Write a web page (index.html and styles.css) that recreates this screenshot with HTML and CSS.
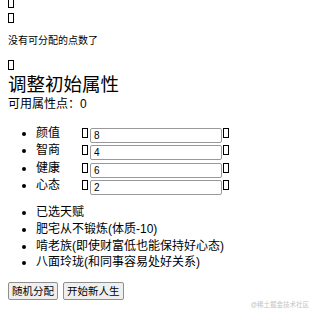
FILE: index.html
```html
<!DOCTYPE html>
<html lang="zh">
<head>
    <meta charset="UTF-8">
    <meta name="viewport" content="width=device-width, initial-scale=1.0">
    <title>人生重开</title>
    <link rel="stylesheet" href="styles.css">
</head>
<body>
    <div class="row first"><span class="tofu"></span></div>
    <div class="row"><span class="tofu"></span></div>
    <p class="tip">没有可分配的点数了</p>
    <div class="row gap"><span class="tofu"></span></div>

    <h2>调整初始属性</h2>
    <p class="points">可用属性点：0</p>

    <ul class="attrs">
        <li><span class="name">颜值</span><span class="tofu"></span><input type="text" value="8"><span class="tofu"></span></li>
        <li><span class="name">智商</span><span class="tofu"></span><input type="text" value="4"><span class="tofu"></span></li>
        <li><span class="name">健康</span><span class="tofu"></span><input type="text" value="6"><span class="tofu"></span></li>
        <li><span class="name">心态</span><span class="tofu"></span><input type="text" value="2"><span class="tofu"></span></li>
    </ul>

    <ul class="talents">
        <li>已选天赋</li>
        <li>肥宅从不锻炼(体质-10)</li>
        <li>啃老族(即使财富低也能保持好心态)</li>
        <li>八面玲珑(和同事容易处好关系)</li>
    </ul>

    <div class="actions">
        <button type="button">随机分配</button>
        <button type="button">开始新人生</button>
    </div>

    <div class="mark">@稀土掘金技术社区</div>
</body>
</html>
```

FILE: styles.css
```css
body {
    margin: 0 8px;
    font-family: "Liberation Sans", "Noto Sans CJK SC", sans-serif;
    font-size: 12px;
    color: #000000;
    background: #ffffff;
}

.tofu {
    display: inline-block;
    width: 4px;
    height: 8px;
    border: 1px solid #000000;
    box-sizing: content-box;
}

.row {
    display: flex;
    align-items: center;
    height: 13px;
    margin-top: 2px;
}

.row.first {
    margin-top: -4px;
}

.row.gap {
    margin-top: 11px;
}

.tip {
    margin: 10px 0 0;
    height: 13px;
    line-height: 13px;
    font-size: 10px;
}

h2 {
    margin: 3px 0 0;
    height: 22px;
    line-height: 22px;
    font-size: 18.5px;
    font-weight: normal;
}

.points {
    margin: 1px 0 0;
    height: 15px;
    line-height: 15px;
}

ul {
    margin: 0;
    padding-left: 28px;
}

.attrs {
    margin-top: 13px;
}

.attrs li {
    height: 17.3px;
    line-height: 17.3px;
}

.name {
    display: inline-block;
    width: 46px;
}

.attrs .tofu {
    vertical-align: -1px;
}

.attrs input {
    width: 132px;
    height: 15px;
    margin: 0 1px 0 2px;
    padding: 0 3px;
    box-sizing: border-box;
    border: 1px solid #999999;
    border-radius: 2px;
    font-family: "Liberation Sans", sans-serif;
    font-size: 10px;
    vertical-align: -2px;
}

.talents {
    margin-top: 10px;
}

.talents li {
    height: 16.7px;
    line-height: 16.7px;
}

.actions {
    display: flex;
    gap: 5px;
    margin-top: 11px;
}

button {
    height: 18px;
    padding: 0 3px;
    font-family: "Liberation Sans", "Noto Sans CJK SC", sans-serif;
    font-size: 10.5px;
    color: #000000;
    background-color: #efefef;
    border: 1px solid #8f8f8f;
    border-radius: 2px;
}

.mark {
    position: absolute;
    right: 2px;
    bottom: 2px;
    font-size: 6.5px;
    color: #c4c4c4;
}
```
